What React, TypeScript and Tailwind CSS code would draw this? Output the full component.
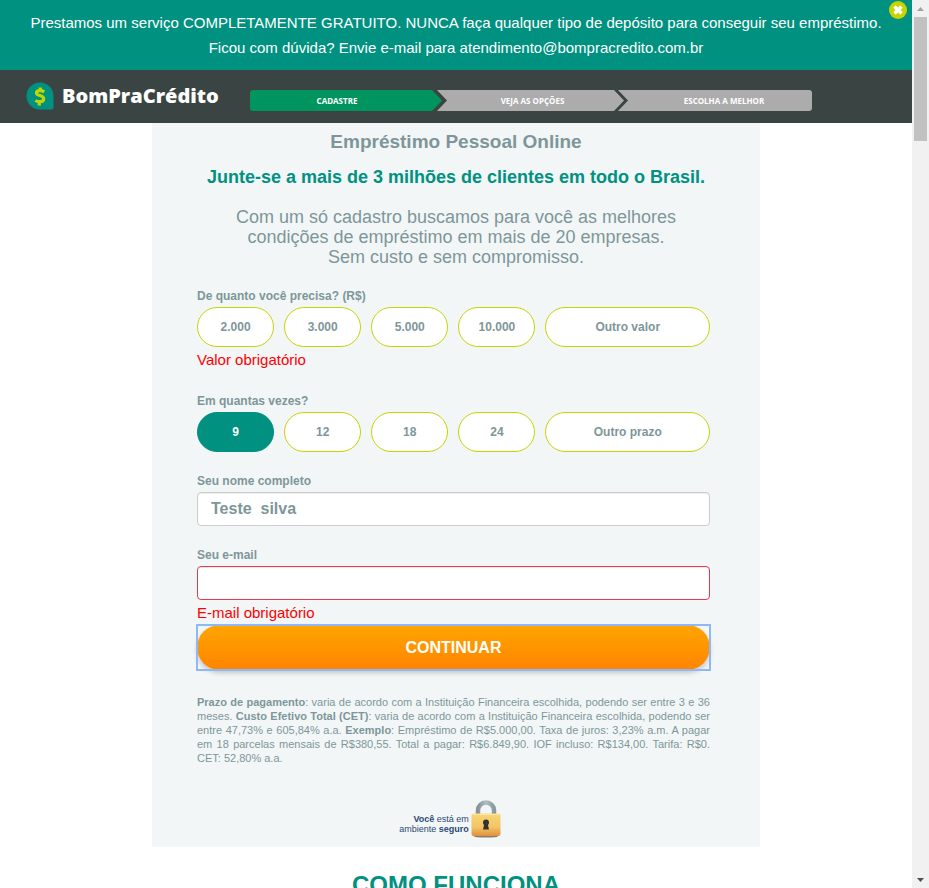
import { useState } from "react";

const amounts = ["2.000", "3.000", "5.000", "10.000", "Outro valor"];
const terms = ["9", "12", "18", "24", "Outro prazo"];

function Notice({ onClose }: { onClose: () => void }) {
  return (
    <div className="relative bg-[#009180] px-4 pt-[10px] pb-[10px] text-center text-[15px] leading-[25px] text-white">
      <p>Prestamos um serviço COMPLETAMENTE GRATUITO. NUNCA faça qualquer tipo de depósito para conseguir seu empréstimo.</p>
      <p>Ficou com dúvida? Envie e-mail para atendimento@bompracredito.com.br</p>
      <button
        type="button"
        aria-label="Fechar"
        onClick={onClose}
        className="absolute top-px right-[5px] flex size-[18px] items-center justify-center rounded-full bg-[#c8d400]"
      >
        <svg viewBox="0 0 10 10" className="size-[10px]" aria-hidden="true">
          <path d="M1.500 1.500 8.500 8.500M8.500 1.500 1.500 8.500" stroke="#fff" strokeWidth="3.400" />
        </svg>
      </button>
    </div>
  );
}

function Header() {
  return (
    <header className="flex h-[53px] items-center bg-[#3a4543] pl-[26px]">
      <a href="#inicio" className="mb-[2px] flex items-center gap-2">
        <svg viewBox="0 0 28 28" className="size-7" aria-hidden="true">
          <path d="M14 .5A13.500 13.500 0 0 0 .5 14C.5 21.500 6.500 27.500 14 27.500H25.500Q27.500 27.500 27.500 25.500V14A13.500 13.500 0 0 0 14 .5Z" fill="#009180" />
          <path d="M18.300 9.800C16.800 9 15.300 8.700 14 8.700C11.800 8.700 10.500 9.500 10.500 11C10.500 14.300 17.700 12.700 17.700 16.800C17.700 18.700 16.200 19.700 13.800 19.700C12.200 19.700 10.600 19.300 9.300 18.500M14.300 5.500V9M13.300 19V23.500" fill="none" stroke="#c3d600" strokeWidth="3.200" />
        </svg>
        <span className="w-[188px] font-['Open_Sans',sans-serif] text-[20px] leading-[28px] font-extrabold text-white">BomPraCrédito</span>
      </a>
      <ol className="mt-[8px] flex h-[21px] w-[562px] text-center font-['Open_Sans',sans-serif] text-[8px] leading-[21px] font-bold text-white">
        <li className="w-[192px] rounded-l-[3px] bg-[#00955e] pr-[18px] [clip-path:polygon(0_0,182px_0,100%_50%,182px_100%,0_100%)]">CADASTRE</li>
        <li className="-ml-[5px] w-[187px] bg-[#acacac] pl-[4px] [clip-path:polygon(0_0,177px_0,100%_50%,177px_100%,0_100%,10px_50%)]">VEJA AS OPÇÕES</li>
        <li className="-ml-[6px] flex-1 rounded-r-[3px] bg-[#acacac] pl-[18px] [clip-path:polygon(0_0,100%_0,100%_100%,0_100%,10px_50%)]">ESCOLHA A MELHOR</li>
      </ol>
    </header>
  );
}

function Options({ label, items, initial }: { label: string; items: string[]; initial?: string }) {
  const [selected, setSelected] = useState(initial);
  return (
    <fieldset>
      <legend className="text-[12px] leading-[16px] font-bold">{label}</legend>
      <div className="mt-[3px] grid grid-cols-[15fr_15fr_15fr_15fr_32fr] gap-[10px]">
        {items.map((item) => (
          <button
            key={item}
            type="button"
            aria-pressed={item === selected}
            onClick={() => setSelected(item)}
            className={
              item === selected
                ? "h-10 rounded-full border border-[#009180] bg-[#009180] text-[12px] font-bold text-white"
                : "h-10 rounded-full border border-[#c8d400] bg-white text-[12px] font-bold"
            }
          >
            {item}
          </button>
        ))}
      </div>
    </fieldset>
  );
}

function Padlock() {
  return (
    <svg viewBox="0 0 32 38" className="h-[38px] w-8" aria-hidden="true">
      <defs>
        <linearGradient id="body" x1="0" y1="0" x2="0" y2="1">
          <stop offset="0" stopColor="#f6d676" />
          <stop offset="0.6" stopColor="#f3c565" />
          <stop offset="1" stopColor="#e09040" />
        </linearGradient>
        <linearGradient id="shackle" x1="0" y1="0" x2="1" y2="0">
          <stop offset="0" stopColor="#84939b" />
          <stop offset="0.5" stopColor="#b2bdc3" />
          <stop offset="1" stopColor="#8a989f" />
        </linearGradient>
      </defs>
      <ellipse cx="16" cy="36.500" rx="12" ry="1" fill="#8a7c66" />
      <path d="M8 16V10.500A8 8 0 0 1 24 10.500V16" fill="none" stroke="url(#shackle)" strokeWidth="4.500" />
      <rect x="1.500" y="13.500" width="29" height="22.500" rx="2" fill="url(#body)" />
      <path d="M3 14.500H29" stroke="#fbe8a8" />
      <circle cx="16" cy="22.500" r="3" fill="#34312e" />
      <path d="M14.500 23H17.500L19 29.500H13Z" fill="#34312e" />
    </svg>
  );
}

function Scrollbar() {
  return (
    <div className="flex w-[17px] shrink-0 flex-col items-center justify-between bg-[#f1f1f1]" aria-hidden="true">
      <div>
        <div className="flex h-[17px] items-center justify-center">
          <svg viewBox="0 0 7 4" className="h-1 w-[7px]"><path d="M0 4 3.500 0 7 4Z" fill="#a3a3a3" /></svg>
        </div>
        <div className="h-[124px] w-[13px] bg-[#c1c1c1]" />
      </div>
      <div className="flex h-[17px] items-center justify-center">
        <svg viewBox="0 0 7 4" className="h-1 w-[7px]"><path d="M0 0 3.500 4 7 0Z" fill="#505050" /></svg>
      </div>
    </div>
  );
}

export default function App() {
  const [noticeOpen, setNoticeOpen] = useState(true);
  const [name, setName] = useState("Teste  silva");
  const [email, setEmail] = useState("");

  return (
    <div className="flex h-screen overflow-hidden bg-white font-['Liberation_Sans',Arial,sans-serif] text-[#7e9699]">
      <div className="min-w-0 flex-1 overflow-hidden">
        {noticeOpen && <Notice onClose={() => setNoticeOpen(false)} />}
        <Header />
        <main>
          <section className="mx-auto w-2/3 bg-[#f2f6f7] pt-[8px] pb-[9px]">
            <div className="text-center">
              <h1 className="text-[19px] leading-[22px] font-bold">Empréstimo Pessoal Online</h1>
              <h2 className="mt-[14px] text-[18px] leading-[20px] font-bold text-[#009180]">Junte-se a mais de 3 milhões de clientes em todo o Brasil.</h2>
              <p className="mt-5 text-[18px] leading-[20px]">
                Com um só cadastro buscamos para você as melhores<br />
                condições de empréstimo em mais de 20 empresas.<br />
                Sem custo e sem compromisso.
              </p>
            </div>

            <form noValidate onSubmit={(e) => e.preventDefault()} className="mt-[21px] pr-[50px] pl-[45px]">
              <Options label="De quanto você precisa? (R$)" items={amounts} />
              <p className="mt-[3px] text-[15px] leading-[20px] text-[#f00]">Valor obrigatório</p>

              <div className="mt-[23px]">
                <Options label="Em quantas vezes?" items={terms} initial="9" />
              </div>

              <label htmlFor="nome" className="mt-[21px] block text-[12px] leading-[16px] font-bold">Seu nome completo</label>
              <input
                id="nome"
                value={name}
                onChange={(e) => setName(e.target.value)}
                className="mt-[3px] block h-[34px] w-full rounded-[4px] border border-[#ccc] bg-white px-[13px] text-[16px] font-bold shadow-[inset_0_1px_1px_rgba(0,0,0,0.075)]"
              />

              <label htmlFor="email" className="mt-[21px] block text-[12px] leading-[16px] font-bold">Seu e-mail</label>
              <input
                id="email"
                type="email"
                value={email}
                onChange={(e) => setEmail(e.target.value)}
                aria-describedby="email-erro"
                className="mt-[3px] block h-[34px] w-full rounded-[4px] border border-[#e8394f] bg-white px-[13px] text-[16px] font-bold shadow-[inset_0_1px_1px_rgba(0,0,0,0.075)]"
              />
              <p id="email-erro" className="mt-[3px] text-[15px] leading-[20px] text-[#f00]">E-mail obrigatório</p>

              <div className="mt-[2px] outline-2 -outline-offset-1 outline-[#8fb8f8]">
                <button
                  type="submit"
                  className="h-[45px] w-full rounded-full bg-linear-to-b from-[#ffa500] to-[#ff8400] text-[16px] font-bold text-white shadow-[0_3px_5px_rgba(0,0,0,0.2)]"
                >
                  CONTINUAR
                </button>
              </div>

              <p className="mt-[25px] text-justify text-[11px] leading-[14px]">
                <b>Prazo de pagamento</b>: varia de acordo com a Instituição Financeira escolhida, podendo ser entre 3 e 36 meses. <b>Custo Efetivo Total (CET)</b>: varia de acordo com a Instituição Financeira escolhida, podendo ser entre 47,73% e 605,84% a.a. <b>Exemplo</b>: Empréstimo de R$5.000,00. Taxa de juros: 3,23% a.m. A pagar em 18 parcelas mensais de R$380,55. Total a pagar: R$6.849,90. IOF incluso: R$134,00. Tarifa: R$0. CET: 52,80% a.a.
              </p>
            </form>

            <div className="mt-[35px] flex items-end justify-center gap-px pr-[11px]">
              <p className="pb-[4px] text-right text-[9px] leading-[10px] text-[#2c4a72]">
                <b>Você</b> está em<br />
                ambiente <b>seguro</b>
              </p>
              <Padlock />
            </div>
          </section>

          <section className="pt-[25px] text-center">
            <h2 className="text-[24px] leading-[26px] font-bold text-[#009180]">COMO FUNCIONA</h2>
          </section>
        </main>
      </div>
      <Scrollbar />
    </div>
  );
}
